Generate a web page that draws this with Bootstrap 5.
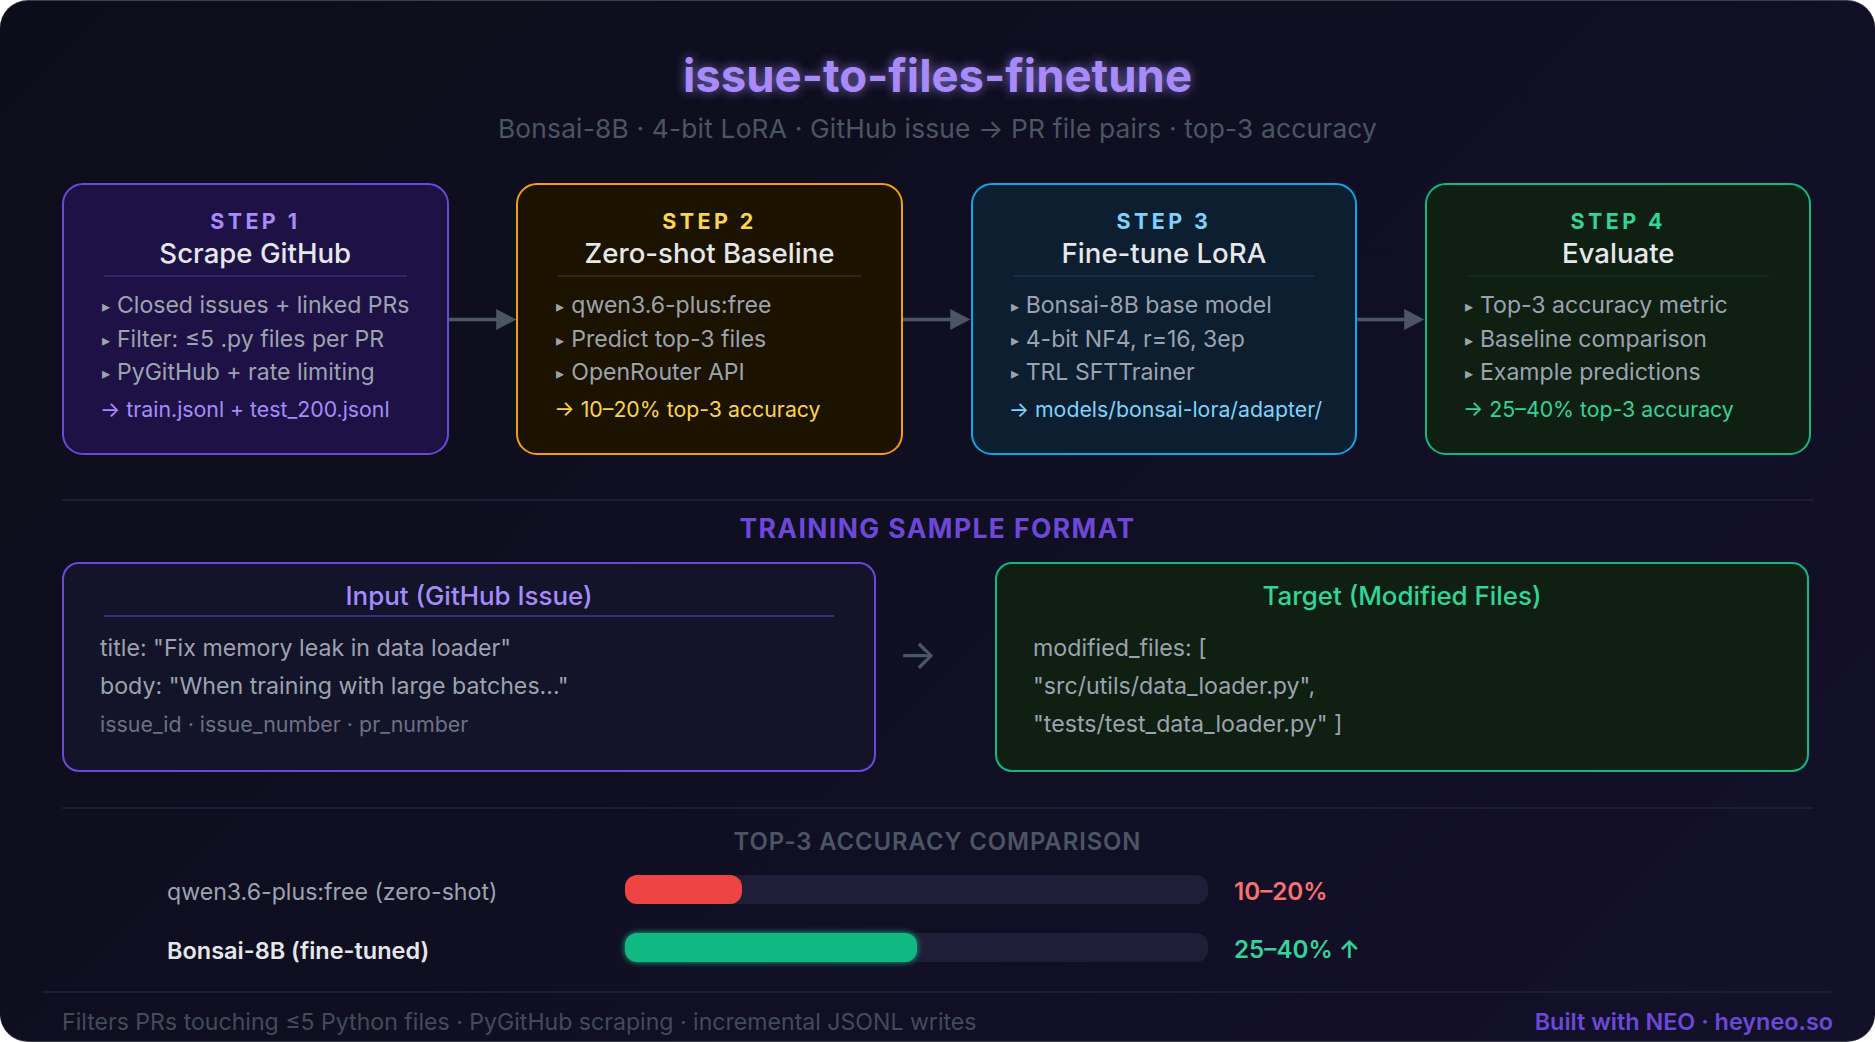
<!DOCTYPE html>
<html lang="en">
  <head>
    <meta charset="UTF-8" />
    <meta name="viewport" content="width=device-width, initial-scale=1" />
    <title>issue-to-files-finetune</title>
    <link href="https://cdn.jsdelivr.net/npm/bootstrap@5.3.0/dist/css/bootstrap.min.css" rel="stylesheet" />
    <style>
      html, body { height: 100%; }
      body { background: #fff; font-family: Inter, "Liberation Sans", sans-serif; overflow: hidden; }

      .frame {
        width: 1875px; height: 1042px; padding: 45px 62px 0;
        border-radius: 28px; overflow: hidden;
        background: linear-gradient(135deg, #0d0d1a 0%, #13102a 100%);
        border-top: 1px solid #3f3f4b; border-bottom: 1px solid #3f3f4b;
      }
      .main-title {
        font-size: 45.5px; line-height: 60px; font-weight: 700; color: #a78bfa; margin: 0;
        text-shadow: 0 0 11px rgba(167, 139, 250, .7);
      }
      .sub-title { font-size: 26.3px; letter-spacing: .2px; line-height: 36px; color: #4b5563; margin-top: 5px; }

      .steps { margin-top: 36px; width: 1749.5px; }
      .step-box {
        width: 386.5px; height: 272px; padding: 22px 38px 0; flex: none;
        border: 2.4px solid; border-radius: 21px; --bs-card-bg: transparent;
      }
      .step-num { font-size: 21.5px; line-height: 28px; font-weight: 700; letter-spacing: 3.4px; }
      .step-name { font-size: 27.6px; line-height: 36px; font-weight: 500; color: #e5e7eb; }
      .step-rule { height: 2px; margin: 4px 2px 0; opacity: .5; }
      .step-list { margin: 12px 0 0; padding: 0; list-style: none; }
      .step-list li { font-size: 23.05px; line-height: 33.5px; color: #9ca3af; white-space: nowrap; }
      .step-list li::before {
        content: "▸"; display: inline-block; font-size: 15.5px; line-height: 1;
        margin-right: 7px; vertical-align: 1px;
      }
      .step-out { margin-top: 3px; margin-left: -2px; font-size: 21.3px; line-height: 32px; white-space: nowrap; }

      .s-purple { background: #1e1145; border-color: #6d48d8; }
      .s-purple .step-num, .s-purple .step-out { color: #a78bfa; }
      .s-purple .step-rule { background: #4c2fa0; }
      .s-amber { background: #1c1200; border-color: #f59e0b; }
      .s-amber .step-num, .s-amber .step-out { color: #fcd34d; }
      .s-amber .step-rule { background: #533a0a; }
      .s-blue { background: #0c1e30; border-color: #0ea5e9; }
      .s-blue .step-num, .s-blue .step-out { color: #7dd3fc; }
      .s-blue .step-rule { background: #133a5e; }
      .s-green { background: #0f1f12; border-color: #10b981; }
      .s-green .step-num, .s-green .step-out { color: #34d399; }
      .s-green .step-rule { background: #14361f; }

      .link-arrow { flex: 1 1 auto; }
      .link-arrow svg { display: block; width: 100%; height: 21px; }

      .rule-line { height: 2px; background: #1e1b36; }
      .sec-head { font-weight: 700; letter-spacing: 1.4px; }
      .sec-purple { margin-top: 11px; font-size: 26.5px; line-height: 33px; color: #6d48d8; }
      .sec-grey { margin-top: 17px; font-size: 23.9px; line-height: 31px; color: #4b5563; font-weight: 600; letter-spacing: .9px; }

      .pair { margin-top: 17px; }
      .pair-box {
        height: 210px; padding: 15px 36px 0; flex: none;
        border: 2.2px solid; border-radius: 17px;
      }
      .pair-in { width: 814px; background: #13132a; border-color: #6d48d8; }
      .pair-out { width: 814px; background: #0f1f12; border-color: #10b981; }
      .pair-name { font-size: 25.9px; line-height: 33px; font-weight: 500; }
      .pair-rule { height: 2px; margin: 3px 4px 0; background: #3a2a80; }
      .pair-out .pair-rule { background: #0f1f12; }
      .pair-body { margin-top: 13px; }
      .pair-line { font-size: 23.2px; line-height: 37.8px; color: #9ca3af; white-space: nowrap; }
      .pair-note { font-size: 21.4px; color: #6b7280; }
      .pair-arrow { width: 119px; color: #4b5563; font-size: 41px; line-height: 1; padding: 0 36px 26px 0; }

      .rule-two { margin-top: 35px; }
      .bar-row { height: 29px; padding-left: 105px; }
      .bar-one { margin-top: 18px; }
      .bar-two { margin-top: 29px; }
      .bar-label { width: 458px; flex: none; font-size: 23.15px; color: #9ca3af; padding-top: 6px; }
      .bar-label.strong { color: #e5e7eb; font-weight: 600; font-size: 23.5px; }
      .progress {
        width: 583px; flex: none; --bs-progress-height: 29px; --bs-progress-bg: #1e1e38;
        --bs-progress-border-radius: 12px; overflow: visible;
      }
      .progress-bar { border-radius: 12px; }
      .bar-red { background: #ef4444; }
      .bar-green { background: #10b981; box-shadow: 0 0 6px #10b981; }
      .bar-val { margin-left: 26px; font-size: 24.2px; font-weight: 600; padding-top: 6px; }

      .foot { margin: 29px -20px 0; border-top: 2px solid #1e1b36; padding: 14px 0 0 20px; }
      .foot-left { font-size: 23.1px; line-height: 30px; color: #434b5a; }
      .foot-right { font-size: 23.4px; line-height: 30px; color: #6d48d8; font-weight: 600; }
    </style>
  </head>
  <body>
    <div class="frame">
      <h1 class="main-title text-center">issue-to-files-finetune</h1>
      <div class="sub-title text-center">Bonsai-8B · 4-bit LoRA · GitHub issue → PR file pairs · top-3 accuracy</div>

      <div class="steps d-flex align-items-center">
        <div class="card step-box s-purple">
          <div class="step-num text-center">STEP 1</div>
          <div class="step-name text-center">Scrape GitHub</div>
          <div class="step-rule"></div>
          <ul class="step-list">
            <li>Closed issues + linked PRs</li>
            <li>Filter: ≤5 .py files per PR</li>
            <li>PyGitHub + rate limiting</li>
          </ul>
          <div class="step-out">→ train.jsonl + test_200.jsonl</div>
        </div>
        <div class="link-arrow"><svg viewBox="0 0 69 21" preserveAspectRatio="none"><rect x="0" y="8.7" width="50" height="3.6" fill="#4b5563"/><path d="M48 0L68.5 10.5L48 21Z" fill="#4b5563"/></svg></div>
        <div class="card step-box s-amber">
          <div class="step-num text-center">STEP 2</div>
          <div class="step-name text-center">Zero-shot Baseline</div>
          <div class="step-rule"></div>
          <ul class="step-list">
            <li>qwen3.6-plus:free</li>
            <li>Predict top-3 files</li>
            <li>OpenRouter API</li>
          </ul>
          <div class="step-out">→ 10–20% top-3 accuracy</div>
        </div>
        <div class="link-arrow"><svg viewBox="0 0 69 21" preserveAspectRatio="none"><rect x="0" y="8.7" width="50" height="3.6" fill="#4b5563"/><path d="M48 0L68.5 10.5L48 21Z" fill="#4b5563"/></svg></div>
        <div class="card step-box s-blue">
          <div class="step-num text-center">STEP 3</div>
          <div class="step-name text-center">Fine-tune LoRA</div>
          <div class="step-rule"></div>
          <ul class="step-list">
            <li>Bonsai-8B base model</li>
            <li>4-bit NF4, r=16, 3ep</li>
            <li>TRL SFTTrainer</li>
          </ul>
          <div class="step-out">→ models/bonsai-lora/adapter/</div>
        </div>
        <div class="link-arrow"><svg viewBox="0 0 69 21" preserveAspectRatio="none"><rect x="0" y="8.7" width="50" height="3.6" fill="#4b5563"/><path d="M48 0L68.5 10.5L48 21Z" fill="#4b5563"/></svg></div>
        <div class="card step-box s-green">
          <div class="step-num text-center">STEP 4</div>
          <div class="step-name text-center">Evaluate</div>
          <div class="step-rule"></div>
          <ul class="step-list">
            <li>Top-3 accuracy metric</li>
            <li>Baseline comparison</li>
            <li>Example predictions</li>
          </ul>
          <div class="step-out">→ 25–40% top-3 accuracy</div>
        </div>
      </div>

      <div class="rule-line" style="margin-top: 44px"></div>
      <div class="sec-head sec-purple text-center">TRAINING SAMPLE FORMAT</div>

      <div class="pair d-flex align-items-center">
        <div class="card pair-box pair-in">
          <div class="pair-name text-center" style="color: #a78bfa">Input (GitHub Issue)</div>
          <div class="pair-rule"></div>
          <div class="pair-body">
            <div class="pair-line">title: "Fix memory leak in data loader"</div>
            <div class="pair-line">body: "When training with large batches..."</div>
            <div class="pair-line pair-note">issue_id · issue_number · pr_number</div>
          </div>
        </div>
        <div class="pair-arrow text-center">→</div>
        <div class="card pair-box pair-out">
          <div class="pair-name text-center" style="color: #34d399">Target (Modified Files)</div>
          <div class="pair-rule"></div>
          <div class="pair-body">
            <div class="pair-line">modified_files: [</div>
            <div class="pair-line">"src/utils/data_loader.py",</div>
            <div class="pair-line">"tests/test_data_loader.py" ]</div>
          </div>
        </div>
      </div>

      <div class="rule-line rule-two"></div>
      <div class="sec-grey text-center">TOP-3 ACCURACY COMPARISON</div>

      <div class="bar-row bar-one d-flex align-items-center">
        <div class="bar-label">qwen3.6-plus:free (zero-shot)</div>
        <div class="progress"><div class="progress-bar bar-red" style="width: 20%"></div></div>
        <div class="bar-val" style="color: #f87171">10–20%</div>
      </div>
      <div class="bar-row bar-two d-flex align-items-center">
        <div class="bar-label strong">Bonsai-8B (fine-tuned)</div>
        <div class="progress"><div class="progress-bar bar-green" style="width: 50%"></div></div>
        <div class="bar-val" style="color: #34d399">25–40% ↑</div>
      </div>

      <div class="foot d-flex justify-content-between">
        <div class="foot-left">Filters PRs touching ≤5 Python files · PyGitHub scraping · incremental JSONL writes</div>
        <div class="foot-right">Built with NEO · heyneo.so</div>
      </div>
    </div>
    <script src="https://cdn.jsdelivr.net/npm/bootstrap@5.3.0/dist/js/bootstrap.bundle.min.js"></script>
  </body>
</html>
